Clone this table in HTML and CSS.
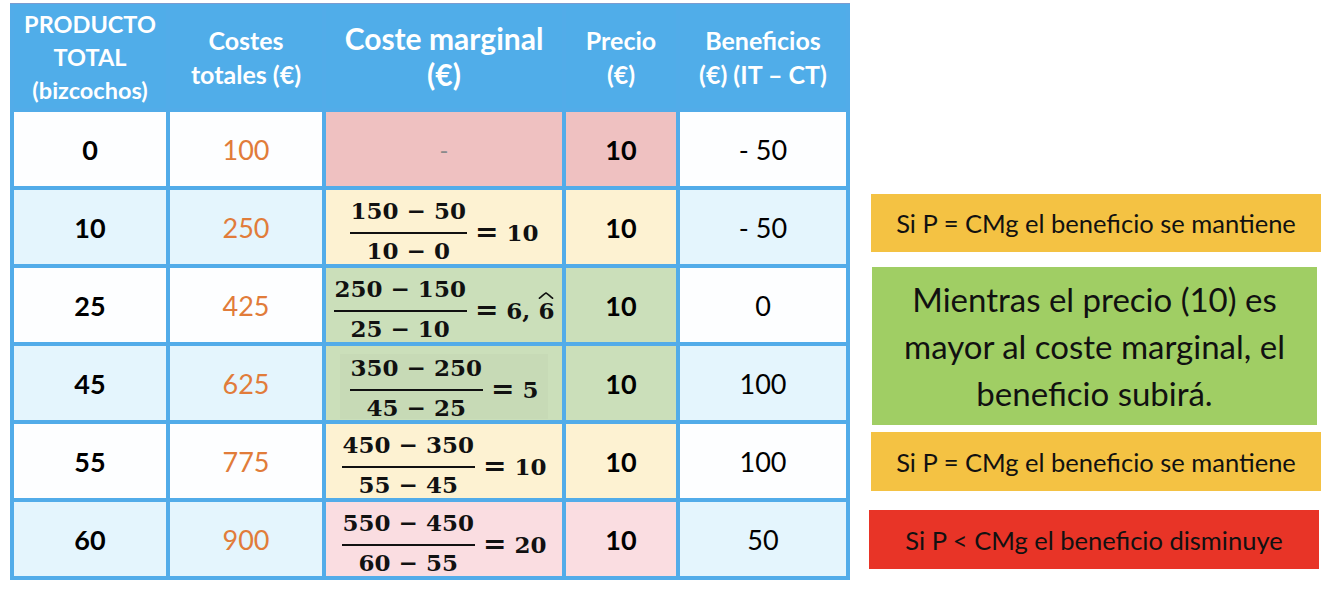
FILE: index.html
```html
<!DOCTYPE html>
<html lang="es">
<head>
<meta charset="utf-8">
<title>Coste marginal</title>
<link rel="stylesheet" href="styles.css">
</head>
<body>
<div class="page">
  <div class="table">
    <div class="th h3">PRODUCTO<br>TOTAL<br>(bizcochos)</div>
    <div class="th">Costes<br>totales (€)</div>
    <div class="th big">Coste marginal<br>(€)</div>
    <div class="th">Precio<br>(€)</div>
    <div class="th">Beneficios<br>(€) (IT – CT)</div>

    <div class="td w b">0</div>
    <div class="td w o">100</div>
    <div class="td pk1 dash">-</div>
    <div class="td pk1 b">10</div>
    <div class="td w">- 50</div>

    <div class="td lb b">10</div>
    <div class="td lb o">250</div>
    <div class="td cr m"><span class="math"><span class="frac"><span class="num">150 − 50</span><span class="den">10 − 0</span></span><span class="eq"><span class="eqs">=</span> 10</span></span></div>
    <div class="td cr b">10</div>
    <div class="td lb">- 50</div>

    <div class="td w b">25</div>
    <div class="td w o">425</div>
    <div class="td gr m"><span class="math"><span class="frac"><span class="num">250 − 150</span><span class="den">25 − 10</span></span><span class="eq"><span class="eqs">=</span> 6, <span class="hat6">6<svg class="hat" viewBox="0 0 16 7"><path d="M1.5 6.2 C4.5 3.8 6.5 1.6 8 1 C9.5 1.6 11.5 3.8 14.5 6.2" fill="none" stroke="#111" stroke-width="1.7" stroke-linecap="round"/></svg></span></span></span></div>
    <div class="td gr b">10</div>
    <div class="td w">0</div>

    <div class="td lb b">45</div>
    <div class="td lb o">625</div>
    <div class="td gr m"><span class="math shade"><span class="frac"><span class="num">350 − 250</span><span class="den">45 − 25</span></span><span class="eq"><span class="eqs">=</span> 5</span></span></div>
    <div class="td gr b">10</div>
    <div class="td lb">100</div>

    <div class="td w b">55</div>
    <div class="td w o">775</div>
    <div class="td cr m"><span class="math"><span class="frac"><span class="num">450 − 350</span><span class="den">55 − 45</span></span><span class="eq"><span class="eqs">=</span> 10</span></span></div>
    <div class="td cr b">10</div>
    <div class="td w">100</div>

    <div class="td lb b">60</div>
    <div class="td lb o">900</div>
    <div class="td pk2 m"><span class="math"><span class="frac"><span class="num">550 − 450</span><span class="den">60 − 55</span></span><span class="eq"><span class="eqs">=</span> 20</span></span></div>
    <div class="td pk2 b">10</div>
    <div class="td lb">50</div>
  </div>

  <div class="notes">
    <div class="note yellow n1">Si P = CMg el beneficio se mantiene</div>
    <div class="note green n2">Mientras el precio (10) es<br>mayor al coste marginal, el<br>beneficio subirá.</div>
    <div class="note yellow n3">Si P = CMg el beneficio se mantiene</div>
    <div class="note red n4">Si P &lt; CMg el beneficio disminuye</div>
  </div>
</div>
</body>
</html>
```

FILE: styles.css
```css
html, body {
  margin: 0;
  padding: 0;
  background: #ffffff;
}

body {
  font-family: Lato, "Open Sans", "Liberation Sans", sans-serif;
  color: #000;
}

.page {
  display: flex;
  align-items: flex-start;
  padding: 3px 0 0 10px;
}

.table {
  display: grid;
  grid-template-columns: 152px 152px 236px 110px 166px;
  grid-template-rows: 104px repeat(6, 74px);
  gap: 4px;
  padding: 0 4px 4px 4px;
  background: #52ace9;
  border-top: 1px solid #7a9bd0;
}

.th {
  display: flex;
  align-items: center;
  justify-content: center;
  text-align: center;
  color: #ffffff;
  font-weight: 700;
  font-size: 25px;
  line-height: 34px;
  background: #50ade9;
  padding-top: 2px;
}

.th.h3 {
  font-size: 23.5px;
  line-height: 33px;
}

.th.big {
  font-size: 30px;
  line-height: 36px;
  padding-top: 0;
}

.td {
  display: flex;
  align-items: center;
  justify-content: center;
  font-size: 27px;
}

.w { background: #fdfeff; }
.lb { background: #e4f5fd; }
.pk1 { background: #efc1c1; }
.pk2 { background: #fadde1; }
.cr { background: #fdf2d2; }
.gr { background: #cbdfba; }

.b { font-weight: 700; }
.o { color: #e17c3a; }
.dash { color: #8a8a8a; font-size: 24px; }

.td.m {
  padding-top: 6px;
}

.math {
  display: inline-flex;
  align-items: center;
  font-family: "DejaVu Serif", "Liberation Serif", serif;
  font-weight: 700;
  font-size: 23px;
  color: #111;
}

.math.shade {
  background: #c7dab6;
  padding: 2px 10px 0 10px;
}

.frac {
  display: inline-flex;
  flex-direction: column;
  align-items: stretch;
  text-align: center;
}

.num {
  line-height: 23px;
  padding: 0 1px 10px 1px;
  border-bottom: 2.5px solid #111;
  white-space: nowrap;
}

.den {
  line-height: 23px;
  padding-top: 5px;
  white-space: nowrap;
}

.eq {
  margin-left: 8px;
  margin-top: 5px;
  white-space: nowrap;
  line-height: 26px;
}

.eqs {
  font-size: 28px;
  line-height: 23px;
}

.hat6 {
  position: relative;
  display: inline-block;
}

.hat {
  position: absolute;
  left: 0;
  top: -6px;
  width: 16px;
  height: 7px;
}

.notes {
  display: flex;
  flex-direction: column;
  margin-left: 21px;
  margin-top: 191px;
}

.note {
  display: flex;
  align-items: center;
  justify-content: center;
  text-align: center;
  font-size: 25.5px;
  color: #111;
  width: 450px;
}

.yellow { background: #f4c243; }
.green { background: #a0ce64; }
.red { background: #e83427; }

.n1 { height: 58px; }

.n2 {
  height: 158px;
  width: 445px;
  margin-left: 1px;
  margin-top: 15px;
  font-size: 33px;
  line-height: 47px;
}

.n3 {
  height: 59px;
  margin-top: 7px;
}

.n4 {
  height: 59px;
  margin-top: 19px;
  margin-left: -2px;
}
```
